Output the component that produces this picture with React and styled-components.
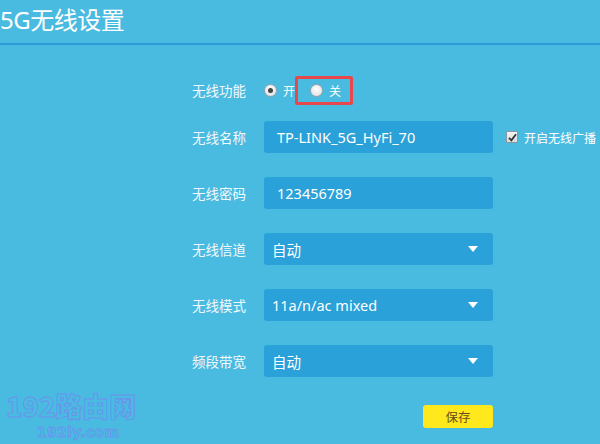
import React from "react";
import styled, { createGlobalStyle } from "styled-components";

const Global = createGlobalStyle`
  html, body { margin: 0; padding: 0; height: 444px; overflow: hidden; }
  body {
    background: #4abbe0;
    font-family: "Noto Sans", "Noto Sans CJK SC", sans-serif;
    color: #ffffff;
  }
`;

const Page = styled.div`
  position: relative;
  width: 600px;
  height: 444px;
  background: #4abbe0;
`;

const Header = styled.div`
  height: 43px;
  border-bottom: 2px solid #2b9bd8;
  box-sizing: content-box;
  display: flex;
  align-items: flex-start;
`;

const Title = styled.h1`
  margin: 0;
  padding: 4px 0 0 0;
  font-family: "Noto Sans", "Noto Sans CJK SC", sans-serif;
  font-weight: 400;
  font-size: 24px;
  line-height: 32px;
  letter-spacing: -0.5px;
  color: #ffffff;
`;

const Form = styled.div`
  display: flex;
  flex-direction: column;
  padding-left: 192px;
  padding-top: 29px;
`;

const Row = styled.div`
  display: flex;
  align-items: center;
  height: 32px;
  margin-top: ${(p) => p.$gap || 0}px;
`;

const Label = styled.div`
  width: 72px;
  font-family: "Noto Sans CJK SC", sans-serif;
  font-size: 13.5px;
  color: #f2f9fc;
`;

const RadioGroup = styled.div`
  display: flex;
  align-items: center;
`;

const RadioOption = styled.div`
  display: flex;
  align-items: center;
  box-sizing: border-box;
  height: ${(p) => (p.$highlight ? "29px" : "auto")};
  border: ${(p) => (p.$highlight ? "3px solid #e8474b" : "none")};
  border-radius: 2px;
  padding: 0 ${(p) => (p.$highlight ? 9 : 0)}px 0 ${(p) => (p.$highlight ? 12 : 0)}px;
`;

const Radio = styled.span`
  width: 13px;
  height: 13px;
  border-radius: 50%;
  box-sizing: border-box;
  border: 1px solid #9aa4aa;
  background: radial-gradient(circle at 50% 35%, #ffffff 0%, #e4e6e8 70%, #c8cdd0 100%);
  display: inline-flex;
  align-items: center;
  justify-content: center;
  &::after {
    content: "";
    width: 5px;
    height: 5px;
    border-radius: 50%;
    background: ${(p) => (p.$checked ? "#444" : "transparent")};
  }
`;

const OptionText = styled.span`
  font-family: "Noto Sans CJK SC", sans-serif;
  font-size: 12px;
  margin-left: 6px;
  color: #ffffff;
`;

const Field = styled.div`
  width: 229px;
  height: 32px;
  box-sizing: border-box;
  background: #2aa1d8;
  border-radius: 3px;
  display: flex;
  align-items: center;
  justify-content: space-between;
  padding: 0 15px 0 ${(p) => (p.$select ? 8 : 13)}px;
  font-family: "Noto Sans", "Noto Sans CJK SC", sans-serif;
  font-size: 14.5px;
  color: #ffffff;
`;

const Arrow = styled.span`
  width: 0;
  height: 0;
  border-left: 5px solid transparent;
  border-right: 5px solid transparent;
  border-top: 6px solid #ffffff;
`;

const CheckWrap = styled.div`
  display: flex;
  align-items: center;
  margin-left: 13px;
`;

const CheckBox = styled.span`
  width: 12px;
  height: 12px;
  box-sizing: border-box;
  border: 1px solid #8e979c;
  background: linear-gradient(#f4f5f6, #d8dcde);
  display: inline-flex;
  align-items: center;
  justify-content: center;
  border-radius: 1px;
`;

const CheckLabel = styled.span`
  font-family: "Noto Sans CJK SC", sans-serif;
  font-size: 12px;
  margin-left: 6px;
  color: #ffffff;
  white-space: nowrap;
`;

const SaveRow = styled.div`
  display: flex;
  padding-left: 231px;
  margin-top: 28px;
`;

const SaveButton = styled.button`
  width: 70px;
  height: 23px;
  border: none;
  border-radius: 3px;
  background: #ffe81c;
  color: #6a4c22;
  font-family: "Noto Sans CJK SC", sans-serif;
  font-size: 12.5px;
  padding: 0;
  display: flex;
  align-items: center;
  justify-content: center;
`;

const Watermark = styled.div`
  position: absolute;
  left: 6px;
  top: 392px;
  display: flex;
  flex-direction: column;
  align-items: flex-start;
  pointer-events: none;
  opacity: 0.8;
`;

const WmMain = styled.div`
  font-family: "Noto Sans CJK SC", sans-serif;
  font-weight: 900;
  font-size: 27px;
  line-height: 27px;
  color: transparent;
  -webkit-text-stroke: 0.9px #7488f2;
  letter-spacing: 0px;
`;

const WmSub = styled.div`
  font-family: "DejaVu Sans", sans-serif;
  font-weight: 700;
  font-size: 14px;
  line-height: 15px;
  margin-left: 31px;
  margin-top: 6px;
  color: transparent;
  -webkit-text-stroke: 0.8px #7488f2;
  letter-spacing: 0.3px;
`;

function SelectField({ value }) {
  return (
    <Field $select>
      <span>{value}</span>
      <Arrow />
    </Field>
  );
}

export default function App() {
  return (
    <Page>
      <Global />
      <Header>
        <Title>5G无线设置</Title>
      </Header>
      <Form>
        <Row>
          <Label>无线功能</Label>
          <RadioGroup>
            <RadioOption>
              <Radio $checked />
              <OptionText>开</OptionText>
            </RadioOption>
            <RadioOption $highlight>
              <Radio />
              <OptionText>关</OptionText>
            </RadioOption>
          </RadioGroup>
        </Row>
        <Row $gap={15}>
          <Label>无线名称</Label>
          <Field>TP-LINK_5G_HyFi_70</Field>
          <CheckWrap>
            <CheckBox>
              <svg width="9" height="9" viewBox="0 0 9 9">
                <path d="M1 4.8 L3.4 7.4 L8 1.2" fill="none" stroke="#333" strokeWidth="1.8" />
              </svg>
            </CheckBox>
            <CheckLabel>开启无线广播</CheckLabel>
          </CheckWrap>
        </Row>
        <Row $gap={24}>
          <Label>无线密码</Label>
          <Field>123456789</Field>
        </Row>
        <Row $gap={24}>
          <Label>无线信道</Label>
          <SelectField value="自动" />
        </Row>
        <Row $gap={24}>
          <Label>无线模式</Label>
          <SelectField value="11a/n/ac mixed" />
        </Row>
        <Row $gap={24}>
          <Label>频段带宽</Label>
          <SelectField value="自动" />
        </Row>
        <SaveRow>
          <SaveButton>保存</SaveButton>
        </SaveRow>
      </Form>
      <Watermark>
        <WmMain>192路由网</WmMain>
        <WmSub>192ly.com</WmSub>
      </Watermark>
    </Page>
  );
}
